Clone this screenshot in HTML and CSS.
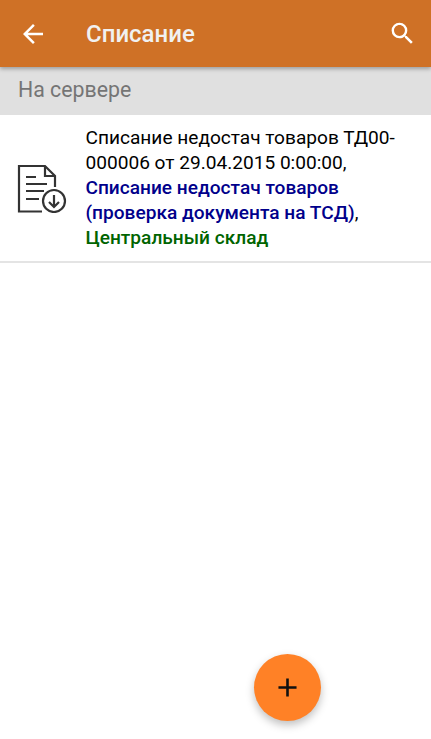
FILE: index.html
```html
<!DOCTYPE html>
<html lang="ru">
<head>
<meta charset="utf-8">
<title>Списание</title>
<link rel="stylesheet" href="styles.css">
</head>
<body>
<div class="app">
  <header class="bar">
    <svg class="ic back" viewBox="0 0 24 24" width="30" height="30"><path d="M20 11H7.83l5.59-5.59L12 4l-8 8 8 8 1.41-1.41L7.83 13H20v-2z"/></svg>
    <h1 class="title">Списание</h1>
    <svg class="ic search" viewBox="0 0 24 24" width="29" height="29"><path d="M15.5 14h-.79l-.28-.27A6.47 6.47 0 0 0 16 9.5 6.5 6.5 0 1 0 9.5 16c1.61 0 3.09-.59 4.23-1.57l.27.28v.79l5 4.99L20.49 19l-4.99-5zm-6 0C7.01 14 5 11.99 5 9.5S7.01 5 9.5 5 14 7.01 14 9.5 11.99 14 9.5 14z"/></svg>
  </header>
  <div class="section">На сервере</div>
  <div class="row">
    <svg class="doc" viewBox="0 0 50 50" width="50" height="50" fill="none" stroke="#333" stroke-width="2.2">
      <path d="M25 48.5H2V3h26l10 10v11"/>
      <path d="M28 3v10h10"/>
      <path d="M9 14h10M9 21h21M9 28h18M9 36h13"/>
      <circle cx="37" cy="38" r="11"/>
      <path d="M37 32v12M32 39l5 5 5-5"/>
    </svg>
    <div class="text">Списание недостач товаров ТД00-000006 от 29.04.2015 0:00:00, <b class="blue">Списание недостач товаров (проверка документа на ТСД)</b>, <b class="green">Центральный склад</b></div>
  </div>
  <button class="fab" aria-label="Добавить">
    <svg viewBox="0 0 24 24" width="31" height="31"><path d="M19 13h-6v6h-2v-6H5v-2h6V5h2v6h6v2z"/></svg>
  </button>
</div>
</body>
</html>
```
FILE: styles.css
```css
html, body { margin: 0; padding: 0; height: 100%; background: #fff; }
.app { position: relative; height: 739px; overflow: hidden; font-family: Roboto, sans-serif; }
.bar { position: relative; z-index: 1; height: 67px; background: #cf7126; display: flex; align-items: center; padding: 0 14px 0 18px; box-shadow: 0 2px 4px rgba(0,0,0,.3); box-sizing: border-box; }
.ic { fill: #fff; flex: none; }
.title { margin: 0 0 0 38px; flex: 1; font-size: 24px; font-weight: 500; color: #f1f1f1; }
.section { height: 48px; box-sizing: border-box; background: #e0e0e0; color: #757575; font-size: 21.3px; padding: 11px 0 0 18px; line-height: 24px; }
.row { display: flex; align-items: center; height: 148px; box-sizing: border-box; border-bottom: 2px solid #e4e4e4; padding-left: 17px; }
.doc { flex: none; }
.text { margin: 0 0 2px 18.5px; font-size: 19.1px; line-height: 25px; color: #000; width: 325px; }
.blue { color: #00008b; font-weight: 500; }
.green { color: #006400; font-weight: 500; }
.fab { position: absolute; left: 253.5px; top: 653.5px; width: 67px; height: 67px; border: 0; padding: 0; border-radius: 50%; background: #ff8126; box-shadow: 0 4px 8px rgba(0,0,0,.25); display: flex; align-items: center; justify-content: center; }
.fab svg { fill: #111; }
```
